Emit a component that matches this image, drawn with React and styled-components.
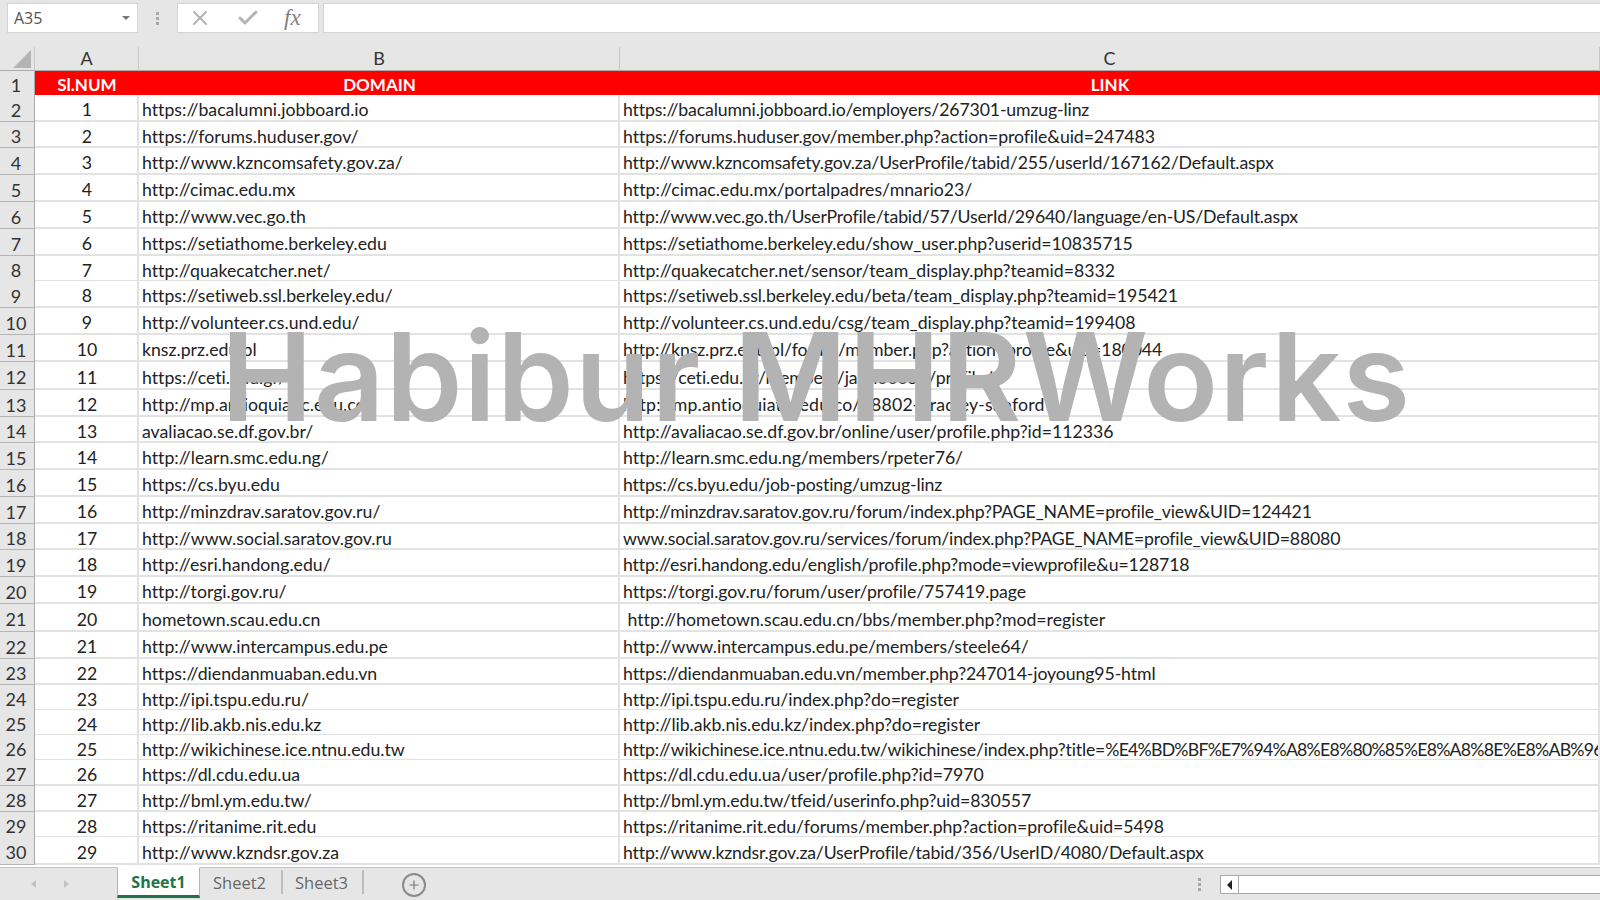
import styled, { createGlobalStyle } from "styled-components";
import { X, Check, Plus } from "lucide-react";

const GlobalStyle = createGlobalStyle`
    html, body {
        margin: 0;
        padding: 0;
        background: #e6e6e6;
    }
`

const Page = styled.div`
    position: relative;
    display: flex;
    flex-direction: column;
    width: 1600px;
    height: 900px;
    overflow: hidden;
    background: #e6e6e6;
    font-family: Lato, "Liberation Sans", sans-serif;
    font-variant-ligatures: none;
`
const FormulaBar = styled.div`
    display: flex;
    align-items: center;
    height: 36px;
    padding-left: 7px;
    box-sizing: border-box;
    flex-shrink: 0;
`
const NameBox = styled.div`
    display: flex;
    align-items: center;
    justify-content: space-between;
    box-sizing: border-box;
    width: 131px;
    height: 30px;
    padding: 0 7px 0 6px;
    background: #fff;
    border: 1px solid #d4d4d4;
    color: #555;
    font: 16px "Open Sans", sans-serif;
`
const Caret = styled.span`
    width: 0;
    height: 0;
    border-left: 4px solid transparent;
    border-right: 4px solid transparent;
    border-top: 4px solid #777;
`
const Dots = styled.div`
    display: flex;
    flex-direction: column;
    gap: 2px;
    width: 39px;
    align-items: center;
`
const Dot = styled.span`
    width: 3px;
    height: 3px;
    background: #a8a8a8;
`
const FormulaTools = styled.div`
    display: flex;
    align-items: center;
    gap: 24px;
    box-sizing: border-box;
    width: 142px;
    height: 30px;
    padding-left: 10px;
    background: #fff;
    border: 1px solid #d4d4d4;
`
const FxLabel = styled.span`
    color: #808080;
    font: italic 23px "Liberation Serif", serif;
`
const FormulaInput = styled.div`
    flex: 1;
    height: 30px;
    margin-left: 4px;
    box-sizing: border-box;
    background: #fff;
    border: 1px solid #d4d4d4;
    border-right: 0;
`
const ColumnHeaders = styled.div`
    display: grid;
    grid-template-columns: 35px 104px 481px 1fr;
    height: 24px;
    margin-top: 11px;
    flex-shrink: 0;
    border-bottom: 1px solid #ababab;
    box-sizing: border-box;
`
const Corner = styled.div`
    display: flex;
    align-items: flex-end;
    justify-content: flex-end;
    padding: 0 3px 3px 0;
    box-sizing: border-box;
    border-right: 1px solid #c8c8c8;
`
const ColumnLabel = styled.div`
    display: flex;
    align-items: center;
    justify-content: center;
    padding-bottom: 2px;
    border-right: 1px solid #c8c8c8;
    color: #333;
    font-size: 18px;
`
const Sheet = styled.div`
    flex: 1;
    min-height: 0;
    overflow: hidden;
    background: #fff;
`
const Row = styled.div`
    display: grid;
    grid-template-columns: 35px 104px 481px 1fr;
    height: ${(p) => p.$height}px;
    box-sizing: border-box;
`
const RowLabel = styled.div`
    display: flex;
    align-items: center;
    justify-content: center;
    box-sizing: border-box;
    padding: 3px 2px 0 0;
    background: #e6e6e6;
    border-right: 1px solid #ababab;
    border-bottom: 1px solid #b5b5b5;
    color: #333;
    font-size: 18px;
`
const Cell = styled.div`
    display: flex;
    align-items: center;
    box-sizing: border-box;
    padding: 4px 0 0 3px;
    overflow: hidden;
    white-space: pre;
    color: #222;
    font-size: 17.7px;
    background: #fff;
    border-right: 2px solid #e2e2e2;
    border-bottom: 2px solid #e2e2e2;
`
const NumberCell = styled(Cell)`
    justify-content: center;
    padding-left: 2px;
`
const HeadCell = styled(Cell)`
    justify-content: center;
    padding: 0;
    color: #fff;
    font-size: 17px;
    font-weight: 700;
    background: #ff0000;
    border: 0;
`
const LinkText = styled.span`
    letter-spacing: ${(p) => p.$tracking}px;
`
const Encoded = styled.span`
    letter-spacing: -0.76px;
`
const Tabs = styled.div`
    display: flex;
    align-items: flex-start;
    height: 33px;
    flex-shrink: 0;
    box-sizing: border-box;
    border-top: 1px solid #c4c4c4;
`
const ScrollArrows = styled.div`
    display: flex;
    align-items: center;
    gap: 28px;
    width: 117px;
    height: 32px;
    padding-left: 31px;
    box-sizing: border-box;
`
const Arrow = styled.span`
    width: 0;
    height: 0;
    border-top: 4px solid transparent;
    border-bottom: 4px solid transparent;
    ${(p) => (p.$left ? "border-right: 5px solid #c2c2c2;" : "border-left: 5px solid #c2c2c2;")}
`
const Tab = styled.div`
    display: flex;
    align-items: center;
    justify-content: center;
    box-sizing: border-box;
    width: ${(p) => p.$width}px;
    margin-top: ${(p) => (p.$active ? "-1px" : "2px")};
    font: ${(p) => (p.$active ? "700 16px" : "400 16.5px")} "Open Sans", sans-serif;
    color: ${(p) => (p.$active ? "#217346" : "#666")};
    background: ${(p) => (p.$active ? "#fff" : "transparent")};
    ${(p) => p.$active && "border: 1px solid #b5b5b5; border-top: 1px solid #fff; border-bottom: 3px solid #217346; height: 31px;"}
    ${(p) => !p.$active && "border-right: 2px solid #bdbdbd; height: 24px; padding-right: 2px;"}
`
const AddSheet = styled.div`
    display: flex;
    align-items: center;
    justify-content: center;
    width: 20px;
    height: 20px;
    margin: 5px 0 0 38px;
    border: 2px solid #8a8a8a;
    border-radius: 50%;
    color: #777;
`
const HScroll = styled.div`
    display: flex;
    align-items: center;
    margin-left: auto;
    margin-top: 7px;
    width: 411px;
`
const ScrollDots = styled(Dots)`
    width: 20px;
    margin-right: 11px;
`
const ScrollButton = styled.div`
    display: flex;
    align-items: center;
    justify-content: center;
    width: 19px;
    height: 19px;
    box-sizing: border-box;
    background: #fff;
    border: 1px solid #ababab;
`
const ScrollTriangle = styled.span`
    width: 0;
    height: 0;
    border-top: 5px solid transparent;
    border-bottom: 5px solid transparent;
    border-right: 5px solid #222;
`
const ScrollTrack = styled.div`
    flex: 1;
    height: 19px;
    box-sizing: border-box;
    background: #fff;
    border: 1px solid #ababab;
    border-left: 0;
    border-right: 0;
`
const Watermark = styled.div`
    position: absolute;
    left: 221px;
    top: 302px;
    color: #b3b3b3;
    font: 600 123px Inter, sans-serif;
    letter-spacing: 1.2px;
    white-space: nowrap;
    pointer-events: none;
`

// height, domain, link, link letter-spacing (Lato runs a bit wider/narrower than the sheet font)
const rows = [
    [27, "https://bacalumni.jobboard.io", "https://bacalumni.jobboard.io/employers/267301-umzug-linz", -0.14],
    [26, "https://forums.huduser.gov/", "https://forums.huduser.gov/member.php?action=profile&uid=247483", -0.08],
    [27, "http://www.kzncomsafety.gov.za/", "http://www.kzncomsafety.gov.za/UserProfile/tabid/255/userId/167162/Default.aspx", -0.15],
    [27, "http://cimac.edu.mx", "http://cimac.edu.mx/portalpadres/mnario23/", 0.03],
    [27, "http://www.vec.go.th", "http://www.vec.go.th/UserProfile/tabid/57/UserId/29640/language/en-US/Default.aspx", -0.17],
    [27, "https://setiathome.berkeley.edu", "https://setiathome.berkeley.edu/show_user.php?userid=10835715", -0.09],
    [25, "http://quakecatcher.net/", "http://quakecatcher.net/sensor/team_display.php?teamid=8332", 0],
    [27, "https://setiweb.ssl.berkeley.edu/", "https://setiweb.ssl.berkeley.edu/beta/team_display.php?teamid=195421", -0.06],
    [27, "http://volunteer.cs.und.edu/", "http://volunteer.cs.und.edu/csg/team_display.php?teamid=199408", -0.06],
    [27, "knsz.prz.edu.pl", "http://knsz.prz.edu.pl/forum/member.php?action=profile&uid=180044", -0.11],
    [28, "https://ceti.edu.gr/", "https://ceti.edu.gr/members/jahn00055/profile/", -0.06],
    [27, "http://mp.antioquiatic.edu.co/", "http://mp.antioquiatic.edu.co/28802-bradley-sanford", 0.2],
    [26, "avaliacao.se.df.gov.br/", "http://avaliacao.se.df.gov.br/online/user/profile.php?id=112336", 0],
    [27, "http://learn.smc.edu.ng/", "http://learn.smc.edu.ng/members/rpeter76/", -0.04],
    [27, "https://cs.byu.edu", "https://cs.byu.edu/job-posting/umzug-linz", -0.16],
    [27, "http://minzdrav.saratov.gov.ru/", "http://minzdrav.saratov.gov.ru/forum/index.php?PAGE_NAME=profile_view&UID=124421", -0.16],
    [26, "http://www.social.saratov.gov.ru", "www.social.saratov.gov.ru/services/forum/index.php?PAGE_NAME=profile_view&UID=88080", -0.17],
    [27, "http://esri.handong.edu/", "http://esri.handong.edu/english/profile.php?mode=viewprofile&u=128718", -0.13],
    [27, "http://torgi.gov.ru/", "https://torgi.gov.ru/forum/user/profile/757419.page", -0.08],
    [28, "hometown.scau.edu.cn", " http://hometown.scau.edu.cn/bbs/member.php?mod=register", -0.01],
    [27, "http://www.intercampus.edu.pe", "http://www.intercampus.edu.pe/members/steele64/", -0.03],
    [26, "https://diendanmuaban.edu.vn", "https://diendanmuaban.edu.vn/member.php?247014-joyoung95-html", -0.11],
    [25, "http://ipi.tspu.edu.ru/", "http://ipi.tspu.edu.ru/index.php?do=register", -0.07],
    [25, "http://lib.akb.nis.edu.kz", "http://lib.akb.nis.edu.kz/index.php?do=register", -0.05],
    [25, "http://wikichinese.ice.ntnu.edu.tw", <>http://wikichinese.ice.ntnu.edu.tw/wikichinese/index.php?title=<Encoded>%E4%BD%BF%E7%94%A8%E8%80%85%E8%A8%8E%E8%AB%96</Encoded></>, -0.16],
    [26, "https://dl.cdu.edu.ua", "https://dl.cdu.edu.ua/user/profile.php?id=7970", -0.03],
    [26, "http://bml.ym.edu.tw/", "http://bml.ym.edu.tw/tfeid/userinfo.php?uid=830557", -0.1],
    [25, "https://ritanime.rit.edu", "https://ritanime.rit.edu/forums/member.php?action=profile&uid=5498", -0.05],
    [28, "http://www.kzndsr.gov.za", "http://www.kzndsr.gov.za/UserProfile/tabid/356/UserID/4080/Default.aspx", -0.17],
];

export default function App() {
    return (
        <Page>
            <GlobalStyle />
            <FormulaBar>
                <NameBox>A35<Caret /></NameBox>
                <Dots><Dot /><Dot /><Dot /></Dots>
                <FormulaTools>
                    <X size={24} color="#b4b4b4" strokeWidth={2} />
                    <Check size={24} color="#b4b4b4" strokeWidth={3} />
                    <FxLabel>fx</FxLabel>
                </FormulaTools>
                <FormulaInput />
            </FormulaBar>
            <ColumnHeaders>
                <Corner>
                    <svg width="18" height="18" viewBox="0 0 18 18">
                        <polygon points="18,0 18,18 0,18" fill="#b4b4b4" />
                    </svg>
                </Corner>
                <ColumnLabel>A</ColumnLabel>
                <ColumnLabel>B</ColumnLabel>
                <ColumnLabel>C</ColumnLabel>
            </ColumnHeaders>
            <Sheet>
                <Row $height={24}>
                    <RowLabel>1</RowLabel>
                    <HeadCell>Sl.NUM</HeadCell>
                    <HeadCell>DOMAIN</HeadCell>
                    <HeadCell>LINK</HeadCell>
                </Row>
                {rows.map(([height, domain, link, tracking], i) => (
                    <Row key={i} $height={height}>
                        <RowLabel>{i + 2}</RowLabel>
                        <NumberCell>{i + 1}</NumberCell>
                        <Cell>{domain}</Cell>
                        <Cell><LinkText $tracking={tracking}>{link}</LinkText></Cell>
                    </Row>
                ))}
            </Sheet>
            <Tabs>
                <ScrollArrows><Arrow $left /><Arrow /></ScrollArrows>
                <Tab $active $width={83}>Sheet1</Tab>
                <Tab $width={83}>Sheet2</Tab>
                <Tab $width={81}>Sheet3</Tab>
                <AddSheet><Plus size={14} strokeWidth={2} /></AddSheet>
                <HScroll>
                    <ScrollDots><Dot /><Dot /><Dot /></ScrollDots>
                    <ScrollButton><ScrollTriangle /></ScrollButton>
                    <ScrollTrack />
                </HScroll>
            </Tabs>
            <Watermark>Habibur MHRWorks</Watermark>
        </Page>
    );
}
